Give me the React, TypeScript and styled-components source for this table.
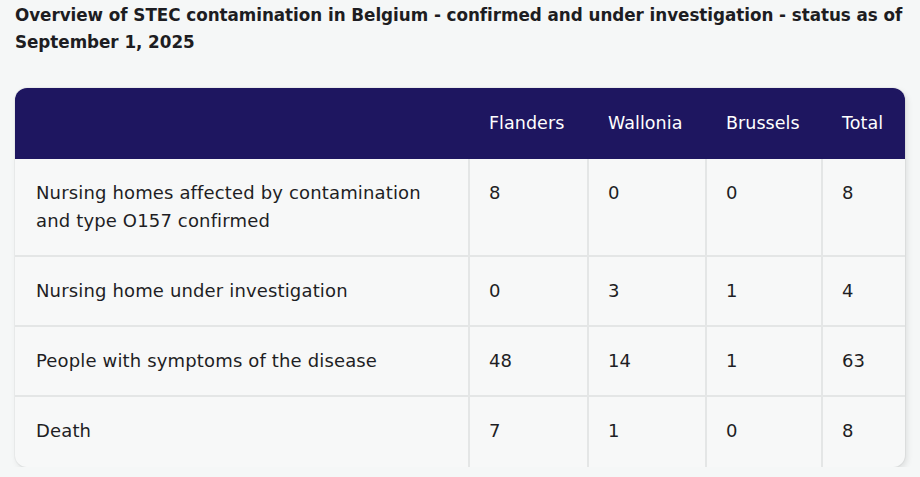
import React from "react";
import styled, { createGlobalStyle } from "styled-components";

const GlobalStyle = createGlobalStyle`
  html, body { margin: 0; padding: 0; background: #f5f7f7; }
  body { font-family: "DejaVu Sans", "Noto Sans", sans-serif; color: #1e1e24; }
`;

const Page = styled.main`
  padding: 2px 15px 0 15px;
  width: 890px;
`;

const Title = styled.h2`
  margin: 0 0 32px 0;
  font-size: 16.8px;
  line-height: 27px;
  font-weight: 700;
  letter-spacing: -0.05px;
  color: #1d1d22;
`;

const Table = styled.div`
  display: grid;
  grid-template-columns: 453px 119px 118px 116px 84px;
  border-radius: 12px;
  overflow: hidden;
  background: #f7f8f8;
  box-shadow: 0 0 0 1px rgba(0, 0, 0, 0.035), 2px 3px 6px rgba(0, 0, 0, 0.1);
`;

const HeadCell = styled.div`
  background: #1e1660;
  color: #ffffff;
  font-size: 17.5px;
  line-height: 28px;
  padding: 21px 0 22px 21px;
  letter-spacing: 0.05px;
`;

const Cell = styled.div<{ $first?: boolean; $last?: boolean }>`
  font-size: 18px;
  line-height: 28px;
  letter-spacing: 0.15px;
  padding: 20px 12px ${(p) => (p.$last ? "22px" : "20px")} ${(p) => (p.$first ? "21px" : "19px")};
  border-left: ${(p) => (p.$first ? "none" : "2px solid #e4e6e6")};
  border-bottom: ${(p) => (p.$last ? "none" : "2px solid #e4e6e6")};
`;

const headers = ["", "Flanders", "Wallonia", "Brussels", "Total"];
const rows: string[][] = [
  ["Nursing homes affected by contamination and type O157 confirmed", "8", "0", "0", "8"],
  ["Nursing home under investigation", "0", "3", "1", "4"],
  ["People with symptoms of the disease", "48", "14", "1", "63"],
  ["Death", "7", "1", "0", "8"],
];

export default function App() {
  return (
    <>
      <GlobalStyle />
      <Page>
        <Title>
          Overview of STEC contamination in Belgium - confirmed and under investigation - status as of September 1, 2025
        </Title>
        <Table>
          {headers.map((h, i) => (
            <HeadCell key={`h${i}`}>{h}</HeadCell>
          ))}
          {rows.map((r, ri) =>
            r.map((c, ci) => (
              <Cell key={`${ri}-${ci}`} $first={ci === 0} $last={ri === rows.length - 1}>
                {c}
              </Cell>
            ))
          )}
        </Table>
      </Page>
    </>
  );
}
